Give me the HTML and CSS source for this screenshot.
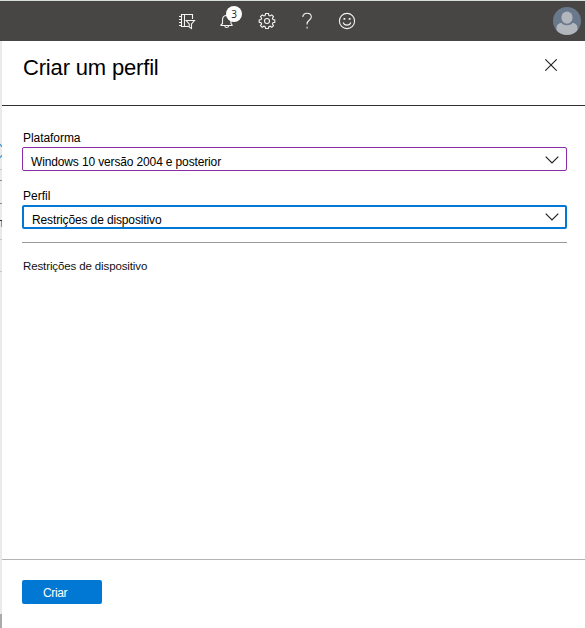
FILE: index.html
```html
<!DOCTYPE html>
<html lang="pt">
<head>
<meta charset="utf-8">
<title>Criar um perfil</title>
<link rel="stylesheet" href="styles.css">
</head>
<body>
<header class="topbar">
  <nav class="tools">
    <svg class="icon" viewBox="0 0 18 18"><path d="M6.5 14.5H3.5V2.5H14.5V7M6.5 2.5V14.5H10.5M1 4.5H4M1 7.5H4M1 10.5H4M1 13.5H4M8.2 8.5H16.5L13.5 12V16.5L11.2 15V12Z"/></svg>
    <span class="bell">
      <svg class="icon" viewBox="0 0 18 18"><path d="M2.5 13.5H14.5M4.5 12V8C4.5 5 6 3.5 8.5 3.5S13 5 13 8V12M2.5 13.5L4.5 11.5M14.5 13.5L13 11.5M6.8 14C7 16 10.4 16 10.6 14"/></svg>
      <span class="badge">3</span>
    </span>
    <svg class="icon" viewBox="0 0 18 18"><path d="M7.6 1.5H10.4L10.9 3.5L12.1 4L13.8 2.9L15.5 4.6L14.4 6.3L14.9 7.5L16.8 7.9V10.3L14.9 10.7L14.4 11.9L15.5 13.6L13.8 15.3L12.1 14.2L10.9 14.7L10.4 16.5H7.6L7.1 14.7L5.9 14.2L4.2 15.3L2.5 13.6L3.6 11.9L3.1 10.7L1.2 10.3V7.9L3.1 7.5L3.6 6.3L2.5 4.6L4.2 2.9L5.9 4L7.1 3.5Z"/><circle cx="9" cy="9" r="2.5"/></svg>
    <svg class="icon" viewBox="0 0 18 18"><path d="M4.8 5C4.8 0 13.3 .2 13.3 5C13.3 8 9.1 8 9.1 11.8V12.5M9.1 14.8V16.4"/></svg>
    <svg class="icon" viewBox="0 0 18 18"><circle cx="9" cy="9" r="7.6"/><path d="M5.2 10.5C6.3 14 11.7 14 12.8 10.5"/><path class="solid" d="M5.5 6H7.3V7.8H5.5ZM10.7 6H12.5V7.8H10.7Z"/></svg>
  </nav>
  <svg class="avatar" viewBox="0 0 28 28"><defs><clipPath id="disc"><circle cx="14" cy="14" r="14"/></clipPath></defs><g clip-path="url(#disc)"><path fill="#69788b" d="M0 0H28V28H0Z"/><path fill="#b1b7bc" d="M3.5 28V21C3.5 17.5 6 16 8.5 16C11 19 17 19 19.5 16C22 16 24.5 17.5 24.5 21V28Z"/><ellipse cx="14" cy="10.6" rx="5.6" ry="6.1" fill="#b1b7bc"/></g></svg>
</header>
<div class="workspace">
  <div class="backdrop">
    <svg viewBox="0 0 2 587"><path fill="#aaa" d="M0 573H2V587H0Z"/><path stroke="#8a8a8a" d="M0 139.5H2M0 162.5H2"/><path stroke="#c8c8c8" d="M0 128.5H2M0 198.5H2M0 230.5H2"/><path stroke="#333" d="M0 179.5H2"/><path stroke="#c58a4a" d="M1.5 180V186"/><path fill="none" stroke="#4b9cd8" stroke-width="1.3" d="M0 103L2 106M0 117L2 114"/></svg>
  </div>
  <main class="panel">
    <div class="panel-head">
      <h1>Criar um perfil</h1>
      <svg class="close" viewBox="0 0 12 12"><path d="M.3 .3L11.7 11.7M11.7 .3L.3 11.7"/></svg>
    </div>
    <section class="form">
      <div class="label"><span class="platform-label">Plataforma</span></div>
      <div class="select"><span class="platform-value">Windows 10 versão 2004 e posterior</span><svg class="chevron" viewBox="0 0 14 8"><path d="M.7 .7L7 7L13.3 .7"/></svg></div>
      <div class="label second"><span class="profile-label">Perfil</span></div>
      <div class="select focused"><span class="profile-value">Restrições de dispositivo</span><svg class="chevron" viewBox="0 0 14 8"><path d="M.7 .7L7 7L13.3 .7"/></svg></div>
      <div class="summary"><span class="summary-text">Restrições de dispositivo</span></div>
    </section>
    <footer class="actions"><button class="create">Criar</button></footer>
  </main>
</div>
</body>
</html>
```
FILE: styles.css
```css
* { box-sizing: border-box; }
body {
  margin: 0;
  width: 585px;
  height: 628px;
  overflow: hidden;
  display: flex;
  flex-direction: column;
  font: 12px/16px "Liberation Sans", Arial, sans-serif;
  color: #000;
  background: #fff;
}
svg { display: block; flex: none; }
.topbar {
  flex: 0 0 41px;
  display: flex;
  justify-content: space-between;
  border-top: 1px solid #d5dcdc;
  background: #484644;
  padding: 6px 4px 0 178px;
}
.tools { display: flex; gap: 22px; padding-top: 5px; }
.icon { width: 18px; height: 18px; fill: none; stroke: #f4f4f4; stroke-width: 1.1; }
.icon .solid { fill: #f4f4f4; stroke: none; }
.bell { position: relative; width: 18px; height: 18px; }
.badge {
  position: absolute;
  left: 8px;
  top: -6px;
  width: 16px;
  height: 16px;
  border-radius: 50%;
  background: #fff;
  color: #222;
  font: 10px/16px "Open Sans", sans-serif;
  text-align: center;
}
.avatar { width: 28px; height: 28px; }
.workspace { flex: 1; display: flex; }
.backdrop { width: 2px; background: #eaeaea; }
.backdrop svg { width: 2px; height: 587px; }
.panel { flex: 1; display: flex; flex-direction: column; background: #fff; }
.panel-head {
  height: 65px;
  display: flex;
  justify-content: space-between;
  padding: 13px 28px 0 21px;
  border-bottom: 1px solid #323130;
}
h1 { margin: 0; font-size: 22px; line-height: 28px; font-weight: 400; letter-spacing: -0.17px; white-space: nowrap; }
.close { width: 12px; height: 12px; margin-top: 5px; fill: none; stroke: #222; stroke-width: 1.1; }
.form { flex: 1; padding: 24px 18px 0 20px; }
.label { height: 17px; padding-left: 1px; white-space: nowrap; }
.label.second { margin-top: 17px; }
.platform-label { letter-spacing: -0.06px; }
.platform-value { letter-spacing: -0.14px; }
.profile-value { letter-spacing: -0.13px; }
.summary-text { font-size: 11.5px; letter-spacing: -0.12px; }
.select {
  height: 24px;
  display: flex;
  justify-content: space-between;
  border: 1px solid #8a2da5;
  border-radius: 2px;
  padding: 6px 7px 0 8px;
  white-space: nowrap;
}
.select.focused { border: 2px solid #0078d4; padding: 5px 6px 0 8px; }
.chevron { width: 14px; height: 8px; margin-top: 2px; fill: none; stroke: #222; stroke-width: 1.2; }
.focused .chevron { margin-top: 1px; }
.summary { margin-top: 13px; padding: 15px 0 0 1px; border-top: 1px solid #999; color: #111; }
.actions { height: 69px; border-top: 1px solid #b3b3b3; padding: 20px; }
.create {
  display: block;
  width: 80px;
  height: 24px;
  padding: 2px 0 0 21px;
  border: 0;
  border-radius: 2px;
  background: #0078d4;
  color: #fff;
  font: inherit;
  letter-spacing: -0.35px;
  text-align: left;
}
```
